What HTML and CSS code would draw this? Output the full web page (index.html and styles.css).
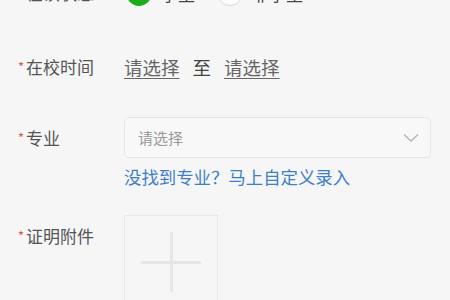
FILE: index.html
```html
<!DOCTYPE html>
<html lang="zh-CN">
<head>
    <meta charset="UTF-8">
    <meta name="viewport" content="width=device-width, initial-scale=1.0">
    <title>教育经历</title>
    <link rel="stylesheet" href="styles.css">
</head>
<body>
    <div class="form">
        <div class="row row-status">
            <div class="label"><span class="star">*</span>在读状态</div>
            <div class="field radios">
                <span class="radio checked"></span><span class="radio-text">学生</span>
                <span class="radio"></span><span class="radio-text">非学生</span>
            </div>
        </div>
        <div class="row row-time">
            <div class="label"><span class="star">*</span>在校时间</div>
            <div class="field times">
                <span class="pick">请选择</span>
                <span class="to">至</span>
                <span class="pick">请选择</span>
            </div>
        </div>
        <div class="row row-major">
            <div class="label"><span class="star">*</span>专业</div>
            <div class="field">
                <div class="select">
                    <span class="placeholder">请选择</span>
                    <svg class="arrow" width="16" height="10" viewBox="0 0 16 10">
                        <path d="M1 1.5 L8 8 L15 1.5" fill="none" stroke="#b5b5b5" stroke-width="1.4"/>
                    </svg>
                </div>
                <div class="custom">没找到专业？马上自定义录入</div>
            </div>
        </div>
        <div class="row row-attach">
            <div class="label"><span class="star">*</span>证明附件</div>
            <div class="field">
                <div class="upload">
                    <span class="plus-h"></span>
                    <span class="plus-v"></span>
                </div>
            </div>
        </div>
    </div>
</body>
</html>
```

FILE: styles.css
```css
body{
    margin: 0;
    background: #f6f6f6;
    font-family: "Noto Sans CJK SC", "Noto Sans", sans-serif;
    color: #555;
    overflow: hidden;
}
.form{
    margin-top: -20px;
    padding-left: 18px;
    padding-right: 19px;
}
.row{
    display: flex;
    align-items: flex-start;
}
.label{
    width: 106px;
    flex-shrink: 0;
    font-size: 17px;
    line-height: 26px;
    color: #555;
}
.star{
    color: #d9534f;
    font-size: 13px;
    display: inline-block;
    width: 8px;
    vertical-align: 2px;
}
.field{
    flex: 1;
}
.radios{
    display: flex;
    align-items: center;
    height: 26px;
    font-size: 17px;
}
.radio{
    width: 26px;
    height: 26px;
    box-sizing: border-box;
    border-radius: 50%;
    border: 1px solid #d8d8d8;
    background: #fff;
    margin-right: 9px;
}
.radio.checked{
    background: #1aad19;
    border-color: #1aad19;
    margin-left: 2px;
}
.radio-text{
    margin-right: 22px;
    color: #444;
}
.row-time{
    margin-top: 48px;
}
.times{
    display: flex;
    font-size: 18.5px;
    line-height: 26px;
}
.pick{
    color: #666;
    text-decoration: underline;
    text-underline-offset: 3px;
}
.to{
    color: #444;
    margin: 0 13px;
}
.row-major{
    margin-top: 37px;
}
.row-major .label{
    margin-top: 8px;
}
.select{
    height: 41px;
    box-sizing: border-box;
    border: 1px solid #e4e4e4;
    border-radius: 5px;
    background: #f8f8f8;
    display: flex;
    align-items: center;
    justify-content: space-between;
    padding: 0 11px 0 13px;
}
.placeholder{
    font-size: 15px;
    color: #999;
}
.custom{
    margin-top: 7px;
    font-size: 17.4px;
    line-height: 24px;
    color: #3d7fc8;
}
.row-attach{
    margin-top: 25px;
}
.row-attach .label{
    margin-top: 9px;
}
.upload{
    width: 94px;
    height: 94px;
    box-sizing: border-box;
    border: 1px solid #e8e8e8;
    position: relative;
    margin-top: 1px;
}
.plus-h{
    position: absolute;
    left: 16px;
    top: 45px;
    width: 60px;
    height: 3px;
    background: #e6e6e6;
}
.plus-v{
    position: absolute;
    left: 45px;
    top: 16px;
    width: 3px;
    height: 60px;
    background: #e6e6e6;
}
```
